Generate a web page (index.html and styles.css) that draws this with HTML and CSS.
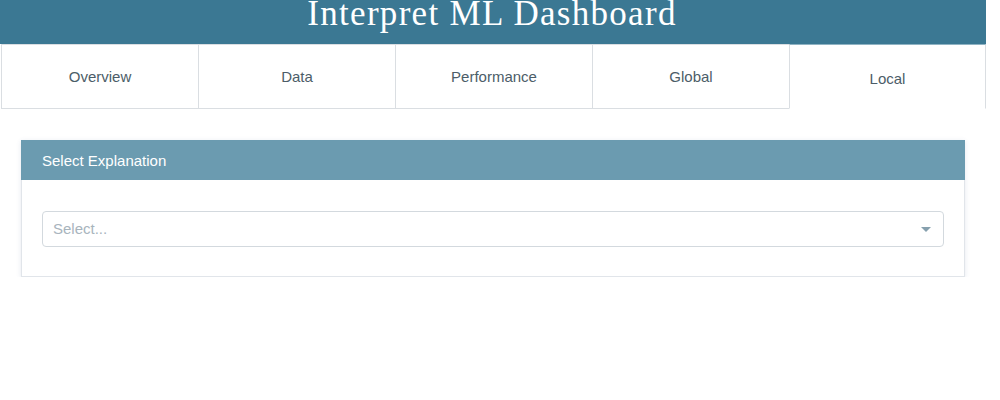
FILE: index.html
```html
<!DOCTYPE html>
<html lang="en">
<head>
<meta charset="utf-8">
<title>Interpret ML Dashboard</title>
<link rel="stylesheet" href="styles.css">
</head>
<body>
<div class="page">
  <header class="banner">
    <h1 class="title">Interpret ML Dashboard</h1>
  </header>
  <nav class="tabs">
    <div class="tab">Overview</div>
    <div class="tab">Data</div>
    <div class="tab">Performance</div>
    <div class="tab">Global</div>
    <div class="tab tab-active">Local</div>
  </nav>
  <section class="card">
    <div class="card-head">Select Explanation</div>
    <div class="card-body">
      <div class="select">
        <span class="placeholder">Select...</span>
        <span class="caret"></span>
      </div>
    </div>
  </section>
</div>
</body>
</html>
```

FILE: styles.css
```css
html, body {
  margin: 0;
  padding: 0;
  background: #ffffff;
}
.page {
  width: 986px;
  font-family: "Liberation Sans", Arial, sans-serif;
}
.banner {
  height: 44px;
  background: #3b7893;
  overflow: hidden;
  display: flex;
  justify-content: center;
}
.title {
  margin: 0;
  font-family: "Liberation Serif", "Times New Roman", serif;
  font-weight: normal;
  font-size: 35px;
  letter-spacing: 1.3px;
  line-height: 36px;
  margin-top: -4px;
  color: #ffffff;
  padding-right: 2px;
}
.tabs {
  display: grid;
  grid-template-columns: repeat(5, 1fr);
  height: 65px;
  padding-left: 1px;
}
.tab {
  display: flex;
  align-items: center;
  justify-content: center;
  border: 1px solid #dadee2;
  border-right: none;
  color: #4c5d68;
  font-size: 15px;
  padding-bottom: 1px;
}
.tab:last-child {
  border-right: 1px solid #dadee2;
}
.tab-active {
  border-top-color: #8fb3c3;
  border-bottom-color: transparent;
  padding-bottom: 0;
  padding-top: 3px;
}
.card {
  margin: 31px 21px 0 21px;
  border: 1px solid #e1e5ea;
  box-shadow: 0 1px 5px rgba(40, 70, 130, 0.12);
  background: #ffffff;
}
.card-head {
  height: 40px;
  background: #6b9bb0;
  color: #ffffff;
  font-size: 15px;
  display: flex;
  align-items: center;
  padding-left: 21px;
  margin: -1px -1px 0 -1px;
}
.card-body {
  padding: 31px 20px 29px 20px;
}
.select {
  height: 34px;
  border: 1px solid #d3d9de;
  border-radius: 4px;
  display: flex;
  align-items: center;
  padding: 0 12px 0 10px;
}
.placeholder {
  flex: 1;
  color: #a8b4bd;
  font-size: 15px;
  margin-top: -2px;
}
.caret {
  width: 0;
  height: 0;
  border-left: 5px solid transparent;
  border-right: 5px solid transparent;
  border-top: 5px solid #86a0ae;
}
```
